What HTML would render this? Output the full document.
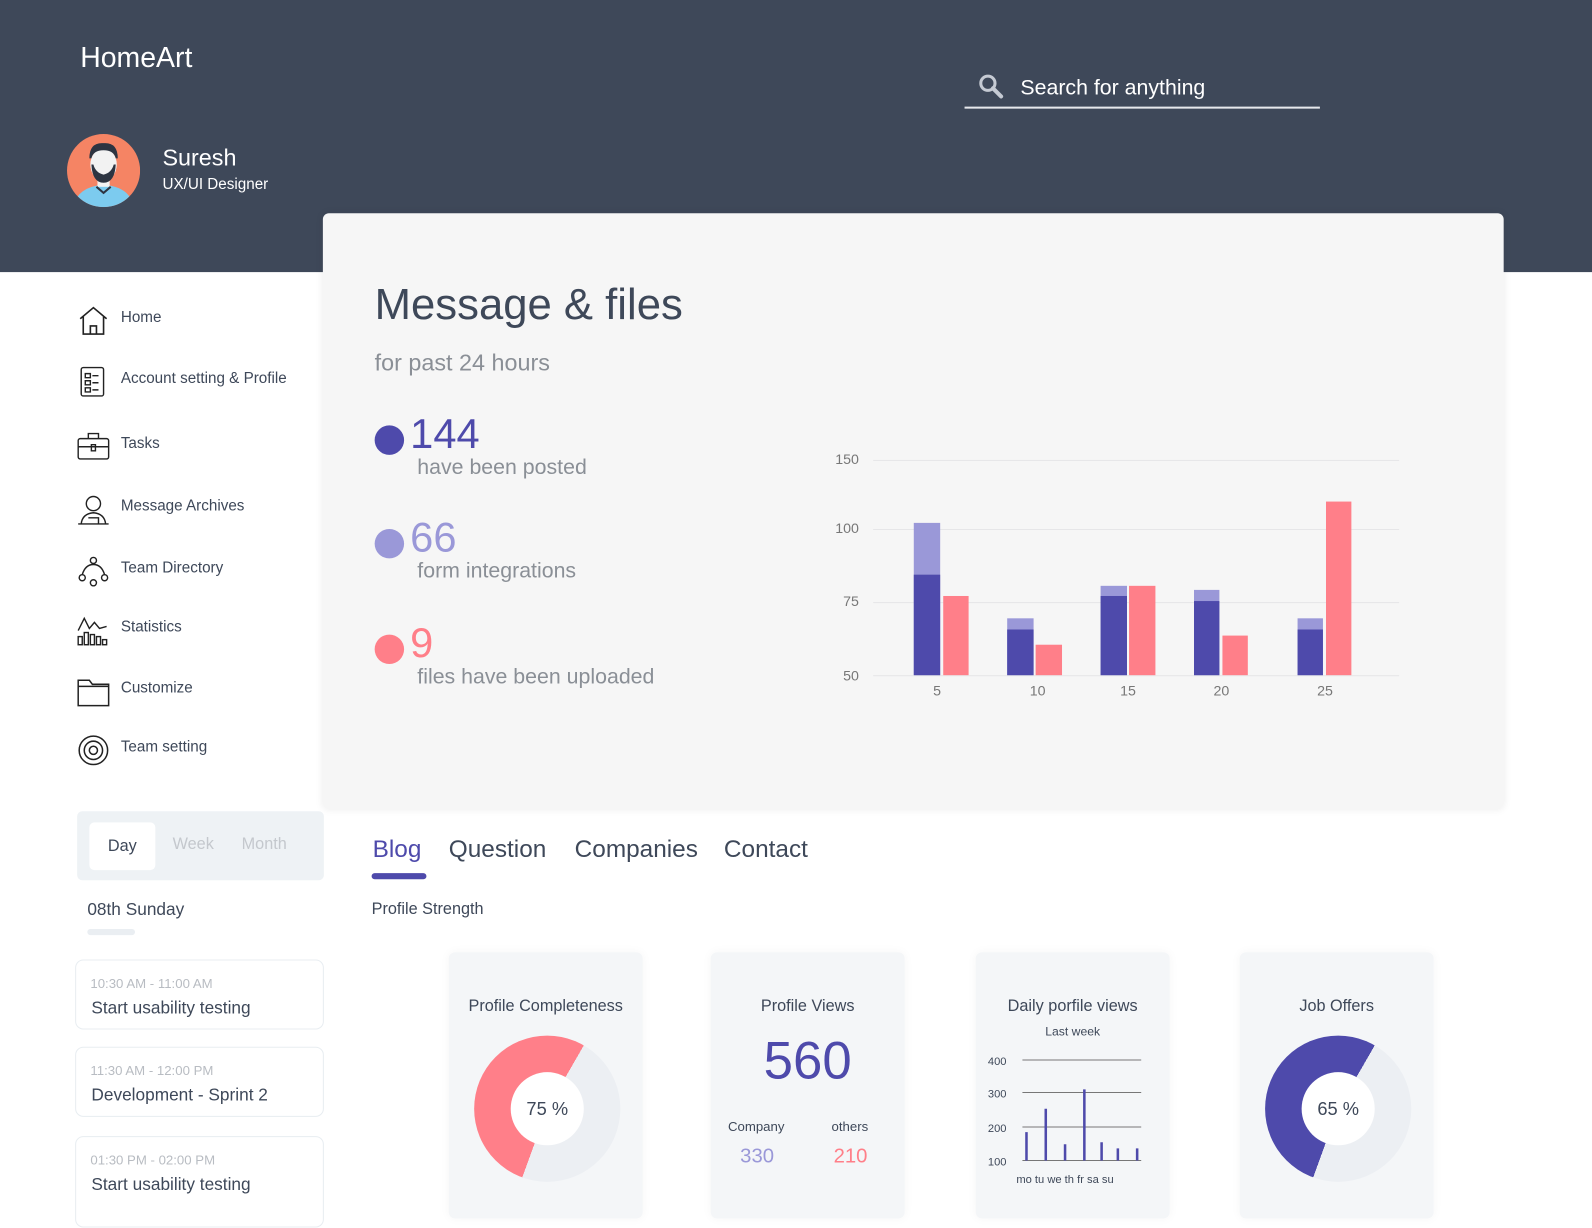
<!DOCTYPE html>
<html><head><meta charset="utf-8"><style>
*{margin:0;padding:0;box-sizing:border-box}
body{width:1592px;height:1200px;overflow:hidden;background:#fff;font-family:"Liberation Sans",sans-serif;position:relative;color:#3e4859}
#w{position:absolute;left:0;top:0;width:1568px;height:1182px;transform:scale(1.01531);transform-origin:0 0}
.a{position:absolute}
.hdr{left:0;top:0;width:1600px;height:268px;background:#3e4859}
.nav{left:76px;font-size:15px;color:#3e4859}
.nav svg{position:absolute;left:0;top:-4px}
.nav span{position:absolute;left:43px;top:0;white-space:nowrap}
.card{left:318px;top:210px;width:1163px;height:587px;background:#f6f6f6;border-radius:6px;box-shadow:0 0 8px rgba(0,0,0,.08)}
.grid{left:860px;width:518px;height:1px;background:#e6e6e8}
.yl{left:800px;width:46px;text-align:right;font-size:14px;color:#777}
.xl{font-size:14px;color:#777;width:40px;text-align:center}
.b{position:absolute}
.sc{top:938px;width:191px;height:262px;background:#f4f6f8;border-radius:6px;box-shadow:0 0 10px rgba(0,0,0,.04);text-align:center}
.ev{left:74px;width:245px;height:69px;border:1px solid #e8edf1;border-radius:8px}
.ev .t{position:absolute;left:14px;top:15px;font-size:13px;color:#b8bcc2}
.ev .n{position:absolute;left:15px;top:37px;font-size:17px;color:#3e4859}
</style></head><body><div id="w">
<div class="a hdr"></div>
<div class="a" style="left:79px;top:41px;font-size:28px;color:#fff">HomeArt</div>
<svg class="a" style="left:963px;top:72px" width="26" height="26" viewBox="0 0 26 26"><circle cx="10" cy="10" r="7" fill="none" stroke="#c5cad3" stroke-width="3"/><path d="M15 15l8 8" stroke="#c5cad3" stroke-width="4" stroke-linecap="round"/></svg>
<div class="a" style="left:1005px;top:75px;font-size:21px;color:#fff">Search for anything</div>
<div class="a" style="left:950px;top:105px;width:350px;height:2px;background:#e6e8ec"></div>
<svg class="a" style="left:66px;top:132px" width="72" height="72" viewBox="0 0 72 72"><defs><clipPath id="c"><circle cx="36" cy="36" r="36"/></clipPath></defs><circle cx="36" cy="36" r="36" fill="#f58464"/><g clip-path="url(#c)"><path d="M6 72 Q10 52 36 50 Q62 52 66 72Z" fill="#7ccbef"/><rect x="30" y="40" width="12" height="12" fill="#f2f2f2"/><ellipse cx="36" cy="30" rx="13" ry="16" fill="#f2f2f2"/><path d="M22 24 Q22 8 36 9 Q50 8 50 24 L48 24 Q46 16 36 16 Q26 16 24 24Z" fill="#2d3441"/><path d="M24 30 Q25 48 36 48 Q47 48 48 30 L46 30 Q44 38 36 40 Q28 38 26 30Z" fill="#2d3441"/><path d="M29 52 L36 58 L43 52" stroke="#2d3441" stroke-width="2" fill="none"/></g></svg>
<div class="a" style="left:160px;top:142px;font-size:23px;color:#fff">Suresh</div>
<div class="a" style="left:160px;top:173px;font-size:15px;color:#fff">UX/UI Designer</div>

<div class="a nav" style="top:304px"><svg width="32" height="32" viewBox="0 0 32 32" fill="none" stroke="#222" stroke-width="1.6"><path d="M3 14 L16 3 L29 14 M6 12 V29 H26 V12 M13 29 V21 H19 V29"/></svg><span>Home</span></div>
<div class="a nav" style="top:364px"><svg width="32" height="32" viewBox="0 0 32 32" fill="none" stroke="#222" stroke-width="1.4"><rect x="4" y="2" width="22" height="28" rx="2"/><path d="M8 8h5v4H8zM8 15h5v4H8zM8 22h5v4H8zM15 10h6M15 17h6M15 24h6"/></svg><span>Account setting &amp; Profile</span></div>
<div class="a nav" style="top:428px"><svg width="32" height="32" viewBox="0 0 32 32" fill="none" stroke="#222" stroke-width="1.4"><rect x="1" y="8" width="30" height="20" rx="2"/><path d="M11 8V3h10v5M1 16h30M14 14h4v6h-4z"/></svg><span>Tasks</span></div>
<div class="a nav" style="top:490px"><svg width="32" height="32" viewBox="0 0 32 32" fill="none" stroke="#222" stroke-width="1.4"><circle cx="16" cy="10" r="7"/><path d="M4 30 Q5 20 16 19 Q27 20 28 30M1 30h30M11 24h10v6"/></svg><span>Message Archives</span></div>
<div class="a nav" style="top:551px"><svg width="32" height="32" viewBox="0 0 32 32" fill="none" stroke="#222" stroke-width="1.4"><circle cx="16" cy="5" r="3"/><circle cx="5" cy="22" r="3"/><circle cx="27" cy="22" r="3"/><circle cx="16" cy="27" r="3"/><path d="M5 19 Q8 9 16 9 Q24 9 27 19"/></svg><span>Team Directory</span></div>
<div class="a nav" style="top:609px"><svg width="32" height="32" viewBox="0 0 32 32" fill="none" stroke="#222" stroke-width="1.4"><path d="M1 16 L7 4 L12 14 L17 8 L22 14 L29 12"/><rect x="1" y="22" width="4" height="8"/><rect x="7" y="18" width="4" height="12"/><rect x="13" y="20" width="4" height="10"/><rect x="19" y="22" width="4" height="8"/><rect x="25" y="25" width="4" height="5"/></svg><span>Statistics</span></div>
<div class="a nav" style="top:669px"><svg width="32" height="32" viewBox="0 0 32 32" fill="none" stroke="#222" stroke-width="1.5"><path d="M1 5h11l3 4h16v21H1z M1 11h30"/></svg><span>Customize</span></div>
<div class="a nav" style="top:727px"><svg width="32" height="32" viewBox="0 0 32 32" fill="none" stroke="#222" stroke-width="1.5"><circle cx="16" cy="16" r="14"/><circle cx="16" cy="16" r="9"/><circle cx="16" cy="16" r="4"/></svg><span>Team setting</span></div>

<div class="a" style="left:76px;top:799px;width:243px;height:68px;background:#eef2f5;border-radius:5px"></div>
<div class="a" style="left:88px;top:810px;width:65px;height:47px;background:#fff;border-radius:5px;text-align:center;line-height:47px;font-size:16px">Day</div>
<div class="a" style="left:170px;top:823px;font-size:16px;color:#c4c8cd">Week</div>
<div class="a" style="left:238px;top:823px;font-size:16px;color:#c4c8cd">Month</div>
<div class="a" style="left:86px;top:886px;font-size:17px">08th Sunday</div>
<div class="a" style="left:86px;top:915px;width:47px;height:6px;background:#eaeef2;border-radius:3px"></div>
<div class="a ev" style="top:945px"><div class="t">10:30 AM - 11:00 AM</div><div class="n">Start usability testing</div></div>
<div class="a ev" style="top:1031px"><div class="t">11:30 AM - 12:00 PM</div><div class="n">Development - Sprint 2</div></div>
<div class="a ev" style="top:1119px;height:90px"><div class="t">01:30 PM - 02:00 PM</div><div class="n">Start usability testing</div></div>

<div class="a card"></div>
<div class="a" style="left:369px;top:276px;font-size:43px;color:#3e4859">Message &amp; files</div>
<div class="a" style="left:369px;top:344px;font-size:23px;color:#8a8f96">for past 24 hours</div>
<div class="a" style="left:369px;top:419px;width:29px;height:29px;border-radius:50%;background:#4e4aab"></div>
<div class="a" style="left:404px;top:404px;font-size:41px;color:#4e4aab">144</div>
<div class="a" style="left:411px;top:449px;font-size:21px;color:#8a8f96">have been posted</div>
<div class="a" style="left:369px;top:521px;width:29px;height:29px;border-radius:50%;background:#9a98d8"></div>
<div class="a" style="left:404px;top:506px;font-size:41px;color:#9a98d8">66</div>
<div class="a" style="left:411px;top:551px;font-size:21px;color:#8a8f96">form integrations</div>
<div class="a" style="left:369px;top:625px;width:29px;height:29px;border-radius:50%;background:#ff7f89"></div>
<div class="a" style="left:404px;top:610px;font-size:41px;color:#ff7f89">9</div>
<div class="a" style="left:411px;top:655px;font-size:21px;color:#8a8f96">files have been uploaded</div>

<div class="a grid" style="top:453px"></div><div class="a grid" style="top:521px"></div><div class="a grid" style="top:593px"></div><div class="a grid" style="top:665px"></div>
<div class="a yl" style="top:444px">150</div><div class="a yl" style="top:512px">100</div><div class="a yl" style="top:584px">75</div><div class="a yl" style="top:657px">50</div>
<div class="b" style="left:900px;top:515px;width:26px;height:150px;background:#9a98d8"></div><div class="b" style="left:900px;top:566px;width:26px;height:99px;background:#4e4aab"></div><div class="b" style="left:929px;top:587px;width:25px;height:78px;background:#ff7f89"></div>
<div class="b" style="left:992px;top:609px;width:26px;height:56px;background:#9a98d8"></div><div class="b" style="left:992px;top:620px;width:26px;height:45px;background:#4e4aab"></div><div class="b" style="left:1020px;top:635px;width:26px;height:30px;background:#ff7f89"></div>
<div class="b" style="left:1084px;top:577px;width:26px;height:88px;background:#9a98d8"></div><div class="b" style="left:1084px;top:587px;width:26px;height:78px;background:#4e4aab"></div><div class="b" style="left:1112px;top:577px;width:26px;height:88px;background:#ff7f89"></div>
<div class="b" style="left:1176px;top:581px;width:25px;height:84px;background:#9a98d8"></div><div class="b" style="left:1176px;top:592px;width:25px;height:73px;background:#4e4aab"></div><div class="b" style="left:1204px;top:626px;width:25px;height:39px;background:#ff7f89"></div>
<div class="b" style="left:1278px;top:609px;width:25px;height:56px;background:#9a98d8"></div><div class="b" style="left:1278px;top:620px;width:25px;height:45px;background:#4e4aab"></div><div class="b" style="left:1306px;top:494px;width:25px;height:171px;background:#ff7f89"></div>
<div class="a xl" style="left:903px;top:672px">5</div><div class="a xl" style="left:1002px;top:672px">10</div><div class="a xl" style="left:1091px;top:672px">15</div><div class="a xl" style="left:1183px;top:672px">20</div><div class="a xl" style="left:1285px;top:672px">25</div>

<div class="a" style="left:367px;top:823px;font-size:24px;color:#4e4aab">Blog</div>
<div class="a" style="left:366px;top:860px;width:54px;height:6px;border-radius:3px;background:#4e4aab"></div>
<div class="a" style="left:442px;top:823px;font-size:24px">Question</div>
<div class="a" style="left:566px;top:823px;font-size:24px">Companies</div>
<div class="a" style="left:713px;top:823px;font-size:24px">Contact</div>
<div class="a" style="left:366px;top:887px;font-size:16px">Profile Strength</div>

<div class="a sc" style="left:442px"><div style="margin-top:45px;font-size:16px">Profile Completeness</div></div>
<div class="a" style="left:467px;top:1020px;width:144px;height:144px;border-radius:50%;background:conic-gradient(#ff7f89 0 30deg,#eceff3 30deg 200deg,#ff7f89 200deg)"></div>
<div class="a" style="left:503px;top:1056px;width:72px;height:72px;border-radius:50%;background:#fff;text-align:center;line-height:72px;font-size:18px">75 %</div>

<div class="a sc" style="left:700px"><div style="margin-top:45px;font-size:16px">Profile Views</div><div style="margin-top:14px;font-size:52px;color:#4e4aab">560</div></div>
<div class="a" style="left:717px;top:1102px;font-size:13px">Company</div><div class="a" style="left:819px;top:1102px;font-size:13px">others</div>
<div class="a" style="left:729px;top:1128px;font-size:20px;color:#9a98d8">330</div><div class="a" style="left:821px;top:1128px;font-size:20px;color:#ff7f89">210</div>

<div class="a sc" style="left:961px"><div style="margin-top:45px;font-size:16px">Daily porfile views</div><div style="margin-top:8px;font-size:12px">Last week</div></div>
<svg class="a" style="left:961px;top:1030px" width="191" height="150"><g font-size="11" fill="#3e4859" font-family="Liberation Sans"><text x="12" y="19">400</text><text x="12" y="51">300</text><text x="12" y="85">200</text><text x="12" y="118">100</text></g><g stroke="#777" stroke-width="1"><path d="M46 14H163M46 46H163M46 80H163M46 113H163"/></g><g stroke="#4e4aab" stroke-width="2.5"><path d="M50 113V85M69 113V62M88 113V97M107 113V43M124 113V95M140 113V101M159 113V101"/></g><g font-size="11" fill="#3e4859" font-family="Liberation Sans"><text x="40" y="135">mo tu we th  fr sa  su</text></g></svg>

<div class="a sc" style="left:1221px"><div style="margin-top:45px;font-size:16px">Job Offers</div></div>
<div class="a" style="left:1246px;top:1020px;width:144px;height:144px;border-radius:50%;background:conic-gradient(#4e4aab 0 30deg,#eceff3 30deg 200deg,#4e4aab 200deg)"></div>
<div class="a" style="left:1282px;top:1056px;width:72px;height:72px;border-radius:50%;background:#fff;text-align:center;line-height:72px;font-size:18px">65 %</div>
</div></body></html>
